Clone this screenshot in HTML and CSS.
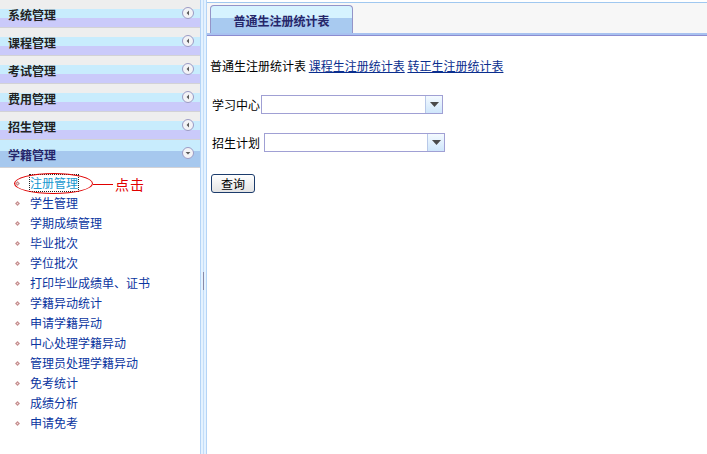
FILE: index.html
```html
<!DOCTYPE html>
<html lang="zh">
<head>
<meta charset="utf-8">
<title>学籍管理</title>
<link rel="stylesheet" href="styles.css">
</head>
<body>
<div class="page">
  <aside class="sidebar">
    <div class="hd"><span class="hd-text">系统管理</span><svg class="ic" width="12" height="12" viewBox="0 0 12 12"><circle cx="6" cy="6" r="5.5" fill="#f3f3f6" stroke="#9a9ac4"/><path d="M7 3.6 L4.6 6 L7 8.4Z" fill="#5a5a5a"/></svg></div>
    <div class="hd"><span class="hd-text">课程管理</span><svg class="ic" width="12" height="12" viewBox="0 0 12 12"><circle cx="6" cy="6" r="5.5" fill="#f3f3f6" stroke="#9a9ac4"/><path d="M7 3.6 L4.6 6 L7 8.4Z" fill="#5a5a5a"/></svg></div>
    <div class="hd"><span class="hd-text">考试管理</span><svg class="ic" width="12" height="12" viewBox="0 0 12 12"><circle cx="6" cy="6" r="5.5" fill="#f3f3f6" stroke="#9a9ac4"/><path d="M7 3.6 L4.6 6 L7 8.4Z" fill="#5a5a5a"/></svg></div>
    <div class="hd"><span class="hd-text">费用管理</span><svg class="ic" width="12" height="12" viewBox="0 0 12 12"><circle cx="6" cy="6" r="5.5" fill="#f3f3f6" stroke="#9a9ac4"/><path d="M7 3.6 L4.6 6 L7 8.4Z" fill="#5a5a5a"/></svg></div>
    <div class="hd"><span class="hd-text">招生管理</span><svg class="ic" width="12" height="12" viewBox="0 0 12 12"><circle cx="6" cy="6" r="5.5" fill="#f3f3f6" stroke="#9a9ac4"/><path d="M7 3.6 L4.6 6 L7 8.4Z" fill="#5a5a5a"/></svg></div>
    <div class="hd active"><span class="hd-text">学籍管理</span><svg class="ic" width="12" height="12" viewBox="0 0 12 12"><circle cx="6" cy="6" r="5.5" fill="#f3f3f6" stroke="#9a9ac4"/><path d="M3.6 5 L8.4 5 L6 7.4Z" fill="#5a5a5a"/></svg></div>
    <ul class="menu">
      <li class="item"><svg class="dot" width="5" height="5" viewBox="0 0 5 5"><path d="M2.5 0 L5 2.5 L2.5 5 L0 2.5Z" fill="#c99494"/><rect x="2" y="2" width="1" height="1" fill="#f2dede"/></svg><a class="link current">注册管理</a></li>
      <li class="item"><svg class="dot" width="5" height="5" viewBox="0 0 5 5"><path d="M2.5 0 L5 2.5 L2.5 5 L0 2.5Z" fill="#c99494"/><rect x="2" y="2" width="1" height="1" fill="#f2dede"/></svg><a class="link">学生管理</a></li>
      <li class="item"><svg class="dot" width="5" height="5" viewBox="0 0 5 5"><path d="M2.5 0 L5 2.5 L2.5 5 L0 2.5Z" fill="#c99494"/><rect x="2" y="2" width="1" height="1" fill="#f2dede"/></svg><a class="link">学期成绩管理</a></li>
      <li class="item"><svg class="dot" width="5" height="5" viewBox="0 0 5 5"><path d="M2.5 0 L5 2.5 L2.5 5 L0 2.5Z" fill="#c99494"/><rect x="2" y="2" width="1" height="1" fill="#f2dede"/></svg><a class="link">毕业批次</a></li>
      <li class="item"><svg class="dot" width="5" height="5" viewBox="0 0 5 5"><path d="M2.5 0 L5 2.5 L2.5 5 L0 2.5Z" fill="#c99494"/><rect x="2" y="2" width="1" height="1" fill="#f2dede"/></svg><a class="link">学位批次</a></li>
      <li class="item"><svg class="dot" width="5" height="5" viewBox="0 0 5 5"><path d="M2.5 0 L5 2.5 L2.5 5 L0 2.5Z" fill="#c99494"/><rect x="2" y="2" width="1" height="1" fill="#f2dede"/></svg><a class="link">打印毕业成绩单、证书</a></li>
      <li class="item"><svg class="dot" width="5" height="5" viewBox="0 0 5 5"><path d="M2.5 0 L5 2.5 L2.5 5 L0 2.5Z" fill="#c99494"/><rect x="2" y="2" width="1" height="1" fill="#f2dede"/></svg><a class="link">学籍异动统计</a></li>
      <li class="item"><svg class="dot" width="5" height="5" viewBox="0 0 5 5"><path d="M2.5 0 L5 2.5 L2.5 5 L0 2.5Z" fill="#c99494"/><rect x="2" y="2" width="1" height="1" fill="#f2dede"/></svg><a class="link">申请学籍异动</a></li>
      <li class="item"><svg class="dot" width="5" height="5" viewBox="0 0 5 5"><path d="M2.5 0 L5 2.5 L2.5 5 L0 2.5Z" fill="#c99494"/><rect x="2" y="2" width="1" height="1" fill="#f2dede"/></svg><a class="link">中心处理学籍异动</a></li>
      <li class="item"><svg class="dot" width="5" height="5" viewBox="0 0 5 5"><path d="M2.5 0 L5 2.5 L2.5 5 L0 2.5Z" fill="#c99494"/><rect x="2" y="2" width="1" height="1" fill="#f2dede"/></svg><a class="link">管理员处理学籍异动</a></li>
      <li class="item"><svg class="dot" width="5" height="5" viewBox="0 0 5 5"><path d="M2.5 0 L5 2.5 L2.5 5 L0 2.5Z" fill="#c99494"/><rect x="2" y="2" width="1" height="1" fill="#f2dede"/></svg><a class="link">免考统计</a></li>
      <li class="item"><svg class="dot" width="5" height="5" viewBox="0 0 5 5"><path d="M2.5 0 L5 2.5 L2.5 5 L0 2.5Z" fill="#c99494"/><rect x="2" y="2" width="1" height="1" fill="#f2dede"/></svg><a class="link">成绩分析</a></li>
      <li class="item"><svg class="dot" width="5" height="5" viewBox="0 0 5 5"><path d="M2.5 0 L5 2.5 L2.5 5 L0 2.5Z" fill="#c99494"/><rect x="2" y="2" width="1" height="1" fill="#f2dede"/></svg><a class="link">申请免考</a></li>
    </ul>
    <div class="ellipse"></div>
    <div class="note"><span class="note-line"></span><span class="note-text">点击</span></div>
  </aside>
  <div class="splitter"><span class="grip"></span></div>
  <main class="main">
    <div class="tabbar"><div class="tab">普通生注册统计表</div></div>
    <div class="content">
      <p class="links">普通生注册统计表 <a class="tlink">课程生注册统计表</a> <a class="tlink">转正生注册统计表</a></p>
      <div class="field f1"><span class="label">学习中心</span><div class="select s1"><span class="sel-btn"><svg width="9" height="5" viewBox="0 0 9 5"><path d="M0 0 L9 0 L4.5 5Z" fill="#4a4a4a"/></svg></span></div></div>
      <div class="field f2"><span class="label">招生计划</span><div class="select s2"><span class="sel-btn"><svg width="9" height="5" viewBox="0 0 9 5"><path d="M0 0 L9 0 L4.5 5Z" fill="#4a4a4a"/></svg></span></div></div>
      <button class="btn" type="button">查询</button>
    </div>
  </main>
</div>
</body>
</html>
```

FILE: styles.css
```css
html, body {
  margin: 0;
  padding: 0;
  background: #ffffff;
}
body {
  font-family: "Noto Sans CJK SC", "Liberation Sans", sans-serif;
  font-size: 12px;
  color: #000;
}
.page {
  display: flex;
  width: 707px;
  height: 454px;
  overflow: hidden;
}
.sidebar {
  position: relative;
  width: 200px;
  flex: none;
  background: #fff;
}
.hd {
  height: 27px;
  border-bottom: 1px solid #d2d2d6;
  background: linear-gradient(#eeeeee 0, #eeeeee 9px, #c8ecfd 9px, #c8ecfd 18px, #cacafa 18px, #cacafa 27px);
  display: flex;
  align-items: center;
  justify-content: space-between;
  padding: 0 6px 0 8px;
}
.hd-text {
  font-weight: bold;
  font-size: 12px;
  color: #222;
  line-height: 14px;
  margin-top: 2px;
}
.hd.active {
  background: linear-gradient(#c8ecfd 0, #c8ecfd 11px, #a6c8ee 11px, #a6c8ee 27px);
}
.hd.active .hd-text {
  color: #26266a;
}
.ic {
  display: block;
  margin-top: -1px;
}
.menu {
  list-style: none;
  margin: 0;
  padding: 5px 0 0 0;
}
.item {
  height: 20px;
  line-height: 20px;
  display: flex;
  align-items: center;
  padding-left: 15px;
}
.dot {
  display: block;
  margin-right: 10px;
  flex: none;
}
.link {
  color: #0a35a0;
  font-size: 12px;
  line-height: 16px;
}
.link.current {
  color: #1898d0;
  outline: 1px dotted #222;
  outline-offset: 0;
}
.ellipse {
  position: absolute;
  left: 14px;
  top: 173px;
  width: 77px;
  height: 19px;
  border: 1px solid #e00000;
  border-radius: 50%;
}
.note {
  position: absolute;
  left: 93px;
  top: 175px;
  display: flex;
  align-items: center;
  height: 18px;
}
.note-line {
  display: block;
  width: 20px;
  height: 1px;
  background: #e00000;
  margin-right: 2px;
}
.note-text {
  color: #e00000;
  font-size: 14px;
  line-height: 18px;
  letter-spacing: 1px;
}
.splitter {
  position: relative;
  width: 7px;
  flex: none;
  background: linear-gradient(to right, #b4d4f6 0, #b4d4f6 1px, #e4f2ff 1px, #e4f2ff 3px, #c4def8 3px, #c4def8 4px, #e4f2ff 4px, #e4f2ff 6px, #b4d4f6 6px);
}
.grip {
  position: absolute;
  left: 3px;
  top: 272px;
  width: 1px;
  height: 18px;
  background: #8a8aa8;
}
.main {
  flex: 1;
  display: flex;
  flex-direction: column;
}
.tabbar {
  margin-top: 2px;
  height: 30px;
  border-top: 1px solid #a0c8f0;
  border-bottom: 2px solid #a8c2f0;
  box-shadow: 0 1px 0 #8c8cd0;
  background: #f7f7f7;
  display: flex;
  align-items: flex-end;
  padding-left: 3px;
}
.tab {
  width: 141px;
  height: 27px;
  border: 1px solid #9494c8;
  border-bottom: none;
  border-radius: 4px 4px 0 0;
  background: linear-gradient(#d6f3ff 0, #d6f3ff 12px, #a8caf0 12px, #a8caf0 100%);
  color: #26266a;
  font-weight: bold;
  font-size: 12px;
  text-align: center;
  line-height: 29px;
}
.content {
  padding: 0 3px;
}
.links {
  margin: 23px 0 0 0;
  line-height: 16px;
  font-size: 12px;
}
.tlink {
  color: #0a2e8e;
  text-decoration: underline;
}
.field {
  display: flex;
  align-items: center;
  margin-left: 2px;
}
.f1 {
  margin-top: 21px;
}
.f2 {
  margin-top: 19px;
}
.label {
  width: 48px;
  font-size: 12px;
  line-height: 16px;
}
.select {
  height: 17px;
  border: 1px solid #a0a0d4;
  background: #fff;
  display: flex;
  justify-content: flex-end;
}
.s1 {
  width: 180px;
  margin-left: 1px;
}
.s2 {
  width: 179px;
  margin-left: 4px;
}
.sel-btn {
  width: 16px;
  height: 17px;
  border-left: 1px solid #b8c8e8;
  background: linear-gradient(#f4faff, #cfe6fb);
  display: flex;
  align-items: center;
  justify-content: center;
}
.sel-btn svg {
  display: block;
}
.btn {
  display: block;
  margin: 22px 0 0 1px;
  width: 44px;
  height: 19px;
  padding: 0;
  border: 1px solid #1c3c6c;
  border-radius: 3px;
  background: linear-gradient(#ffffff, #e4e4e4);
  font-family: "Noto Sans CJK SC", "Liberation Sans", sans-serif;
  font-size: 12px;
  line-height: 16px;
  color: #000;
}
```
